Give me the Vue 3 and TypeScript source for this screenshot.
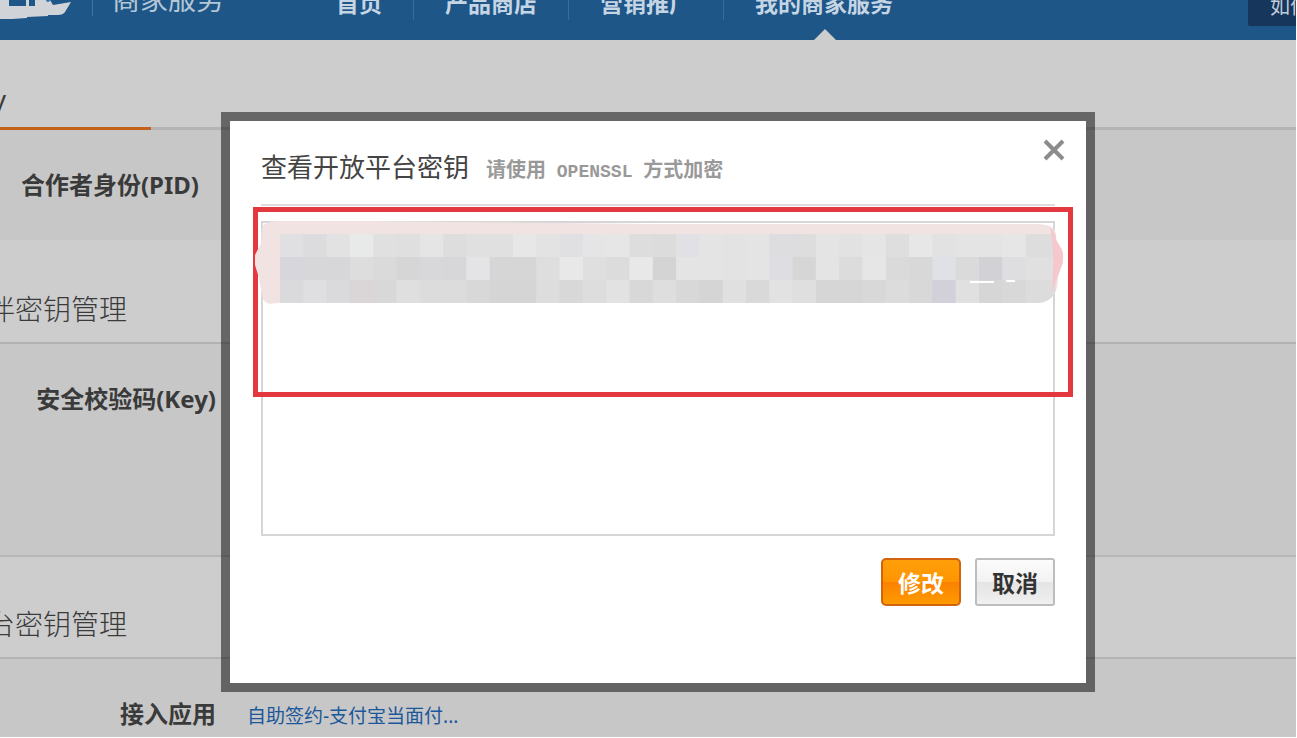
<script setup lang="ts">
interface NavItem {
  label: string
  active: boolean
}

const navItems: NavItem[] = [
  { label: '首页', active: false },
  { label: '产品商店', active: false },
  { label: '营销推广', active: false },
  { label: '我的商家服务', active: true },
]

const shades: string[][] = [
  'e0e0e2 dcdcde e2e2e2 e8eaea e0e0e1 dfdfe0 e5e5e5 dddddd e0e0e0 e0e0e0 e7e7e7 e3e3e4 e0e0e2 e5e5e5 e6e6e6 dddddd dcdcdc e1e1e5 e4e4e4 e3e3e4 e4e4e4 dddddf dddddd e4e4e4 e2e2e2 e5e5e5 dedede e7e7e7 e2e2e2 e4e4e4 e4e4e4 e6e6e6 dddddd'.split(' '),
  'd6d6dc d7d7da d7d7da dddddd dadada d6d6d7 d8d8db d7d7da e4e4e6 d6d6d6 d6d6d6 dedede e8e8e8 dfdfdf dcdcdc e8e8e8 d4d4d4 e4e4e4 e4e4e4 e3e3e3 e4e4e4 dedee2 d6d6d6 e4e4e4 dcdcdc e6e6e6 dadada d8d8d8 e0e0e7 dadada d2d2d6 dedee1 e0e0e0'.split(' '),
  'dadadd dfdfe1 dadadc dad6d8 d8d8d8 dfdfdf dcdcdc dcdcdc d8d8d8 d5d5d5 d5d5d5 dddddd d8d8d8 dddddd e2e2e2 d8d8d8 dedede d8d8d8 d5d5d5 e0e0e0 d9d9d9 e2e2e2 dfdfdf d6d6d6 d6d6d6 d8d8d8 dcdcdc d8d8d8 d2d0d8 e0e0e0 d6d6d6 d8d8d8 dcdcdc'.split(' '),
]
const cellWidth = 23.3
const cellHeight = 23
</script>

<template>
  <div class="screen">
    <div class="page">
      <header class="topbar">
        <svg class="logo" viewBox="0 0 72 20" aria-hidden="true">
          <path d="M0 0H9V6H26V0H29V6H35V0H50L53 5L71 2L65 12Q63 15 58 15L48 15V16L27 17V18L12 19H0Z" />
          <circle class="logo-dot" cx="48" cy="0" r="2" />
        </svg>
        <span class="brand">商家服务</span>
        <nav class="nav">
          <a v-for="item in navItems" :key="item.label" href="#" class="nav-item" :class="{ active: item.active }">
            <span>{{ item.label }}</span>
          </a>
        </nav>
        <button type="button" class="help">如何</button>
      </header>

      <main>
        <div class="tabs"><a href="#" class="tab">Key</a></div>
        <section class="row row-pid"><span class="label inset">合作者身份(PID)</span></section>
        <h2 class="heading">合作伙伴密钥管理</h2>
        <section class="row row-key"><span class="label">安全校验码(Key)</span></section>
        <h2 class="heading lined">开放平台密钥管理</h2>
        <section class="row row-app">
          <span class="label">接入应用</span>
          <a href="#" class="app-link">自助签约-支付宝当面付...</a>
        </section>
      </main>
    </div>

    <div class="overlay">
      <div class="dialog" role="dialog" aria-labelledby="dialog-title">
        <button type="button" class="close" aria-label="关闭">
          <svg viewBox="0 0 22 22"><path d="M2 2L20 20M20 2L2 20" /></svg>
        </button>
        <div class="dialog-head">
          <h1 id="dialog-title">查看开放平台密钥</h1>
          <p class="hint">请使用<span class="mono">&nbsp;OPENSSL&nbsp;</span>方式加密</p>
        </div>
        <div class="field">
          <textarea aria-labelledby="dialog-title"></textarea>
          <div class="marker"></div>
          <svg class="mosaic" viewBox="0 0 810 90" preserveAspectRatio="none" aria-hidden="true">
            <defs>
              <clipPath id="smear">
                <path d="M8 10Q10 3 24 3H120L200 4L400 6H780Q800 5 802 16L803 30L804 60Q804 74 797 80Q792 85 782 85H22Q10 88 8 78L5 60L1 47V37L7 25Z" />
              </clipPath>
            </defs>
            <path class="rim" d="M794 8Q800 8 802 22L808 32Q811 43 806 52L801 66L794 76Z" />
            <g clip-path="url(#smear)">
              <rect class="blush" width="804" height="90" />
              <template v-for="(line, r) in shades" :key="r">
                <rect
                  v-for="(shade, c) in line"
                  :key="c"
                  :x="26 + c * cellWidth"
                  :y="16 + r * cellHeight"
                  :width="c === 32 ? 30 : cellWidth + 1"
                  :height="cellHeight + 1"
                  :fill="'#' + shade"
                />
              </template>
            </g>
            <path class="rim" d="M796 10Q800 10 802 22L808 32Q811 43 806 52L801 66L798 74Q801 30 796 10Z" />
            <path class="fleck" d="M716 64H740M752 63H761" />
          </svg>
        </div>
        <div class="actions">
          <button type="button" class="btn primary">修改</button>
          <button type="button" class="btn">取消</button>
        </div>
      </div>
    </div>
  </div>
</template>

<style>
body {
  margin: 0;
  background: #fff;
}
</style>

<style scoped>
.screen {
  position: relative;
  min-height: 738px;
  overflow: hidden;
  font-family: 'Noto Sans', 'Noto Sans CJK SC', sans-serif;
  color: #3a3a3a;
}
.page {
  margin-right: 1px;
  background: #cdcdcd;
}
.topbar {
  display: flex;
  align-items: flex-end;
  height: 40px;
  background: #1d5687;
  white-space: nowrap;
}
.logo {
  flex: none;
  align-self: flex-start;
  width: 72px;
  height: 20px;
  fill: #d0d4d8;
}
.logo-dot {
  fill: #2f75b0;
}
.brand {
  margin: 0 81px 24px 20px;
  padding: 0 0 2px 19px;
  border-left: 1px solid #44739d;
  font-size: 28px;
  line-height: 30px;
  color: #b4c6d6;
}
.nav {
  display: flex;
}
.nav-item {
  position: relative;
  height: 40px;
  display: flex;
  align-items: flex-end;
  font-size: 23px;
  font-weight: 700;
  line-height: 24px;
  color: #c5d5e4;
  text-decoration: none;
}
.nav-item span {
  margin-bottom: 20px;
  padding: 0 31px 5px;
  border-right: 1px solid #3c6d99;
}
.nav-item:last-child span {
  border-right: 0;
}
.nav-item.active::after {
  content: '';
  position: absolute;
  bottom: 0;
  left: 50%;
  margin-left: -10px;
  border: 11px solid transparent;
  border-top: 0;
  border-bottom-color: #cdcdcd;
}
.help {
  flex: none;
  width: 48px;
  height: 34px;
  margin: 0 0 14px auto;
  padding: 0 0 4px 22px;
  border: 0;
  border-radius: 0 0 0 2px;
  background: #17365c;
  overflow: hidden;
  font: inherit;
  font-size: 20px;
  line-height: 20px;
  text-align: left;
  color: #c0cddb;
}
.tabs {
  display: flex;
  height: 87px;
  border-bottom: 3px solid #b4b4b4;
}
.tab {
  display: flex;
  justify-content: flex-end;
  align-items: flex-end;
  box-sizing: border-box;
  width: 151px;
  height: 90px;
  padding: 0 145px 12px 0;
  border-bottom: 3px solid #c2601c;
  font-size: 26px;
  line-height: 32px;
  color: #3a3a3a;
  text-decoration: none;
}
.row {
  display: flex;
  gap: 31px;
  box-sizing: border-box;
  background: #c7c7c7;
  line-height: 32px;
}
.row-pid {
  height: 110px;
  padding-top: 39px;
}
.row-key {
  height: 213px;
  padding-top: 39px;
  border-top: 2px solid #b2b2b2;
}
.row-app {
  height: 80px;
  padding-top: 39px;
  border-top: 2px solid #b2b2b2;
}
.label {
  box-sizing: border-box;
  width: 216px;
  text-align: right;
  font-size: 24px;
  font-weight: 700;
}
.inset {
  padding-right: 17px;
}
.app-link {
  padding-top: 2px;
  font-size: 19px;
  color: #1b579a;
  text-decoration: none;
}
.heading {
  display: flex;
  justify-content: flex-end;
  box-sizing: border-box;
  width: 127px;
  height: 102px;
  margin: 0;
  padding-top: 49px;
  font-size: 28px;
  font-weight: 300;
  line-height: 40px;
  white-space: nowrap;
}
.lined {
  width: auto;
  justify-content: flex-start;
  padding-top: 47px;
  border-top: 2px solid #b7b7b7;
  text-indent: -97px;
}
.overlay {
  position: absolute;
  inset: 0;
  display: flex;
  align-items: flex-start;
  padding: 112px 202px 0 221px;
}
.dialog {
  position: relative;
  flex: 1;
  padding: 0 31px 77px;
  border: 9px solid rgba(0, 0, 0, 0.5);
  background: #fff;
  background-clip: padding-box;
}
.close {
  position: absolute;
  top: 18px;
  right: 21px;
  width: 22px;
  height: 22px;
  padding: 0;
  border: 0;
  background: none;
}
.close svg {
  display: block;
  fill: none;
  stroke: #8c8c8c;
  stroke-width: 4;
}
.dialog-head {
  display: flex;
  align-items: baseline;
  gap: 17px;
  box-sizing: border-box;
  height: 85px;
  padding-top: 26px;
  border-bottom: 2px solid #dcdcdc;
}
h1 {
  margin: 0;
  font-size: 26px;
  font-weight: 400;
  line-height: 40px;
  color: #444;
}
.hint {
  margin: 0;
  font-size: 20px;
  font-weight: 700;
  line-height: 32px;
  color: #999;
}
.mono {
  font-family: 'Liberation Mono', monospace;
  font-size: 18px;
}
.field {
  position: relative;
  margin-top: 15px;
}
textarea {
  display: block;
  box-sizing: border-box;
  width: 100%;
  height: 315px;
  border: 2px solid #d6d6d6;
  border-radius: 0;
  background: #fff;
  resize: none;
  outline: 0;
}
.marker {
  position: absolute;
  top: -14px;
  left: -8px;
  right: -18px;
  height: 180px;
  border: 5px solid #e2383e;
}
.mosaic {
  position: absolute;
  top: -3px;
  left: -7px;
  width: calc(100% + 16px);
  height: 90px;
}
.rim {
  fill: #f6c8cd;
}
.blush {
  fill: #f2e3e3;
}
.fleck {
  stroke: #fff;
  stroke-width: 2;
}
.actions {
  display: flex;
  justify-content: flex-end;
  gap: 14px;
  margin-top: 22px;
}
.btn {
  width: 80px;
  height: 48px;
  padding: 0;
  border: 2px solid #bdbdbd;
  border-radius: 3px;
  background: linear-gradient(#fcfcfc, #f2f2f2 49%, #e4e4e4 51%, #f0f0f0);
  font: inherit;
  font-size: 23px;
  font-weight: 700;
  color: #333;
}
.primary {
  border-color: #d2640f;
  border-radius: 5px;
  background: linear-gradient(#ff9f0a, #ff9500 49%, #fb8200 51%, #ff9a00);
  color: #fff;
}
</style>
